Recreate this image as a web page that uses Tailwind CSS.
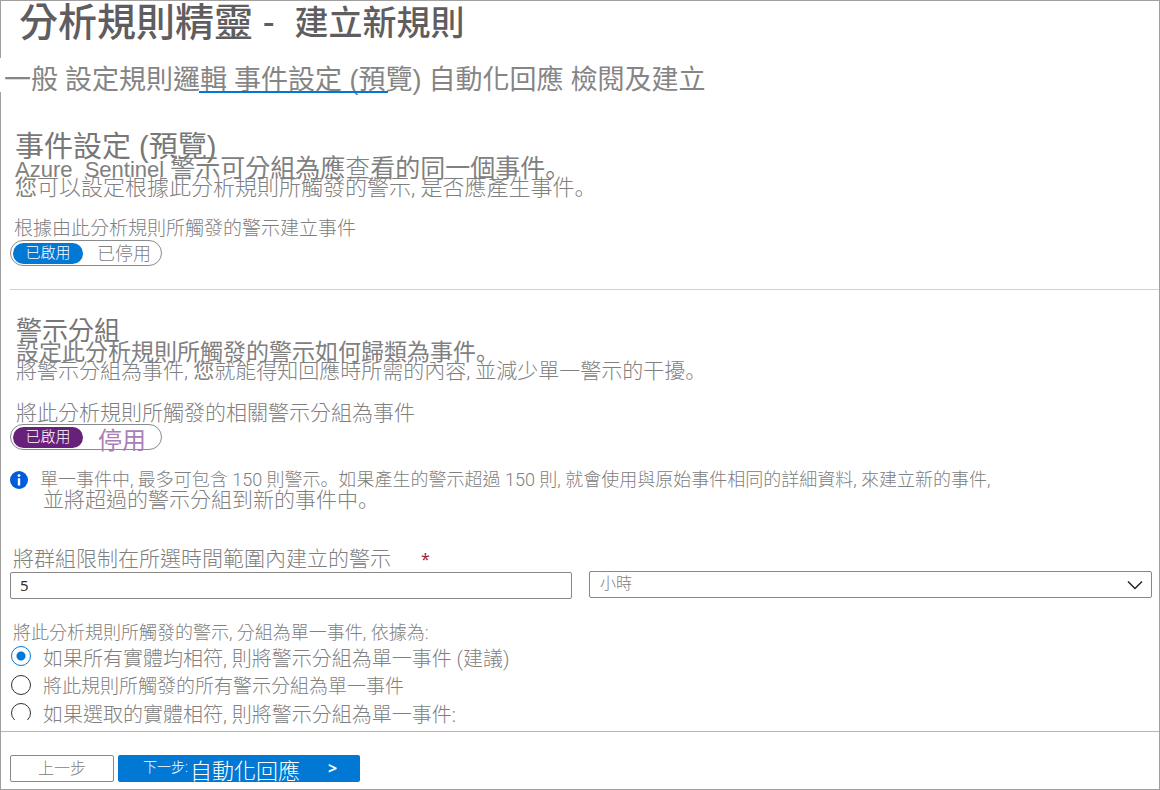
<!DOCTYPE html>
<html lang="zh-Hant">
<head>
<meta charset="utf-8">
<meta name="viewport" content="width=device-width, initial-scale=1">
<title>分析規則精靈 - 建立新規則</title>
<script src="https://cdn.jsdelivr.net/npm/@tailwindcss/browser@4"></script>
</head>
<body class="bg-white font-['Roboto','Noto_Sans_CJK_TC',sans-serif] font-light text-[#808080]">
<div class="flex min-h-screen flex-col border border-[#a0a0a0]">
  <h1 class="flex items-center pl-[18px] font-medium leading-[44px] text-[#605d60] whitespace-pre">
    <span class="text-[39px]">分析規則精靈</span><span class="ml-2.5 text-[34px]">-</span><span class="ml-5 text-[34px]">建立新規則</span>
  </h1>

  <nav class="relative -ml-px mt-[13px] flex h-[34px] gap-[7px] bg-white pl-1 pt-[9px] font-['Liberation_Sans','Noto_Sans_CJK_TC',sans-serif] text-[27px] font-normal leading-[26px] text-[#858585] whitespace-nowrap" aria-label="步驟">
    <a href="#general">一般</a>
    <a href="#logic">設定規則邏輯</a>
    <a href="#incident" aria-current="step" class="relative">事件設定 (預覽)<span class="absolute -left-[35px] top-6 h-[2px] w-[189px] bg-[#0078d4]"></span></a>
    <a href="#automation">自動化回應</a>
    <a href="#review">檢閱及建立</a>
  </nav>

  <main>
    <section class="pl-[14px] pt-[42px]">
      <h2 class="font-['Liberation_Sans','Noto_Sans_CJK_TC',sans-serif] text-[29px] font-normal leading-[26px] text-[#777]">事件設定 (預覽)</h2>
      <p class="h-[18px] text-[25px] font-normal leading-[18px]"><span class="font-['Liberation_Sans'] text-[22px]">Azure &nbsp;Sentinel </span>警示可分組為應<span class="font-light">查</span>看的同一個事件<span lang="ja" class="font-['Roboto','Noto_Sans_CJK_JP',sans-serif]">。</span></p>
      <p class="h-5 text-[22px] leading-5"><span class="font-normal">您</span>可以設定根據此分析規則所觸發的警示, 是否應產生事件<span lang="ja" class="font-['Roboto','Noto_Sans_CJK_JP',sans-serif]">。</span></p>
      <p id="create-label" class="-ml-px mt-5 text-[19px] leading-[22px]">根據由此分析規則所觸發的警示建立事件</p>
    </section>
    <div role="group" aria-labelledby="create-label" class="ml-[9px] flex h-[26px] w-[152px] items-center rounded-full border border-[#8a8a8a] pl-0.5">
      <button type="button" aria-pressed="true" class="h-[21px] w-[70px] rounded-full bg-[#0078d4] text-[15px] leading-[21px] text-white">已啟用</button>
      <button type="button" aria-pressed="false" class="ml-3.5 pt-0.5 text-lg leading-6">已停用</button>
    </div>

    <hr class="ml-[9px] mt-[23px] border-[#d2d2d2]">

    <section class="pl-[15px] pt-7">
      <h2 class="text-[26px] font-normal leading-[26px] text-[#777]">警示分組</h2>
      <p class="h-[18px] text-[23px] font-normal leading-[18px]">設定此分析規則所觸發的警示如何歸類為事件<span lang="ja" class="font-['Roboto','Noto_Sans_CJK_JP',sans-serif]">。</span></p>
      <p class="h-5 text-[21px] leading-[18px]">將警示分組為事件, <span class="font-normal">您</span>就能得知回應時所需的內容, 並減少單一警示的干擾<span lang="ja" class="font-['Roboto','Noto_Sans_CJK_JP',sans-serif]">。</span></p>
      <p id="group-label" class="mt-5 text-[21px] leading-[22px]">將此分析規則所觸發的相關警示分組為事件</p>
    </section>
    <div role="group" aria-labelledby="group-label" class="ml-[9px] flex h-[26px] w-[152px] items-center rounded-full border border-[#8a8a8a] pl-0.5">
      <button type="button" aria-pressed="true" class="h-[21px] w-[70px] rounded-full bg-[#68217a] text-[15px] leading-[21px] text-white">已啟用</button>
      <button type="button" aria-pressed="false" class="ml-[15px] pt-2 text-2xl font-normal leading-6 text-[#a980b5]">停用</button>
    </div>

    <div class="mt-5 flex h-10 gap-3 pl-[9px]">
      <svg class="mt-px size-[18px] shrink-0" viewBox="0 0 18 18" aria-hidden="true"><circle cx="9" cy="9" r="9" fill="#015cda"/><circle cx="9" cy="4.6" r="1.4" fill="#fff"/><rect x="7.8" y="7.2" width="2.4" height="7.4" rx=".4" fill="#fff"/></svg>
      <p class="text-lg leading-5">單一事件中, 最多可包含 150 則警示<span lang="ja" class="font-['Roboto','Noto_Sans_CJK_JP',sans-serif]">。</span>如果產生的警示超過 150 則, 就會使用與原始事件相同的詳細資料, 來建立新的事件,<span class="block pl-[3px] text-[21px] leading-5">並將超過的警示分組到新的事件中<span lang="ja" class="font-['Roboto','Noto_Sans_CJK_JP',sans-serif]">。</span></span></p>
    </div>

    <div class="mt-[37px] flex h-6 pl-3 text-[21px] leading-6">
      <label for="limit">將群組限制在所選時間範圍內建立的警示</label><span class="ml-[30px] font-['Noto_Sans'] text-base font-normal text-[#a4262c]">*</span>
    </div>
    <div class="grid grid-cols-[562fr_563fr] gap-[17px] pl-[9px] pr-[7px]">
      <input id="limit" type="text" value="5" class="mt-px h-[27px] min-w-0 rounded-[2px] border border-[#8a8886] px-[9px] pb-0.5 font-['Noto_Sans'] text-[15px] font-normal text-[#323130]">
      <div class="relative">
        <select aria-label="時間單位" class="h-[27px] w-full appearance-none rounded-[2px] border border-[#8a8886] bg-white px-2.5 pb-0.5 text-base leading-5"><option>小時</option></select>
        <svg class="pointer-events-none absolute right-[9px] top-[9px] h-[10px] w-4" viewBox="0 0 16 10" fill="none" stroke="#201f1e" stroke-width="1.4" aria-hidden="true"><path d="M1 1.5l7 7 7-7"/></svg>
      </div>
    </div>

    <fieldset class="mt-[22px] pl-[10px]">
      <legend class="pl-0.5 text-lg leading-6">將此分析規則所觸發的警示, 分組為單一事件, 依據為:</legend>
      <label class="flex h-7 items-start gap-3 text-[20px] leading-7">
        <span class="mt-px h-5 overflow-hidden"><input type="radio" name="grouping" checked class="block size-5 appearance-none rounded-full border border-[#0078d4] bg-[radial-gradient(circle,#0078d4_4px,transparent_5px)]"></span>如果所有實體均相符, 則將警示分組為單一事件 (建議)</label>
      <label class="flex h-7 items-start gap-3 text-[19px] leading-7">
        <span class="mt-0.5 h-5 overflow-hidden"><input type="radio" name="grouping" class="block size-5 appearance-none rounded-full border border-[#323130]"></span>將此規則所觸發的所有警示分組為單一事件</label>
      <label class="flex h-7 items-start gap-3 text-[20px] leading-7">
        <span class="mt-0.5 h-[17px] overflow-hidden"><input type="radio" name="grouping" class="block size-5 appearance-none rounded-full border border-[#323130]"></span>如果選取的實體相符, 則將警示分組為單一事件:</label>
    </fieldset>
  </main>

  <footer class="mt-0.5 flex gap-1 border-t border-[#b5b5b5] pl-[9px] pt-[23px]">
    <button type="button" class="h-[27px] w-[104px] rounded-[2px] border border-[#8a8886] text-base leading-6">上一步</button>
    <button type="button" class="flex h-[27px] w-[242px] items-start rounded-[2px] bg-[#0078d4] pl-[25px] text-white"><span class="text-sm leading-6">下一步:</span><span class="pt-1 pl-0.5 text-[22px] leading-[26px]">自動化回應</span><span class="pl-7 font-['Noto_Sans'] text-base font-bold leading-[26px]">&gt;</span></button>
  </footer>
</div>
</body>
</html>
